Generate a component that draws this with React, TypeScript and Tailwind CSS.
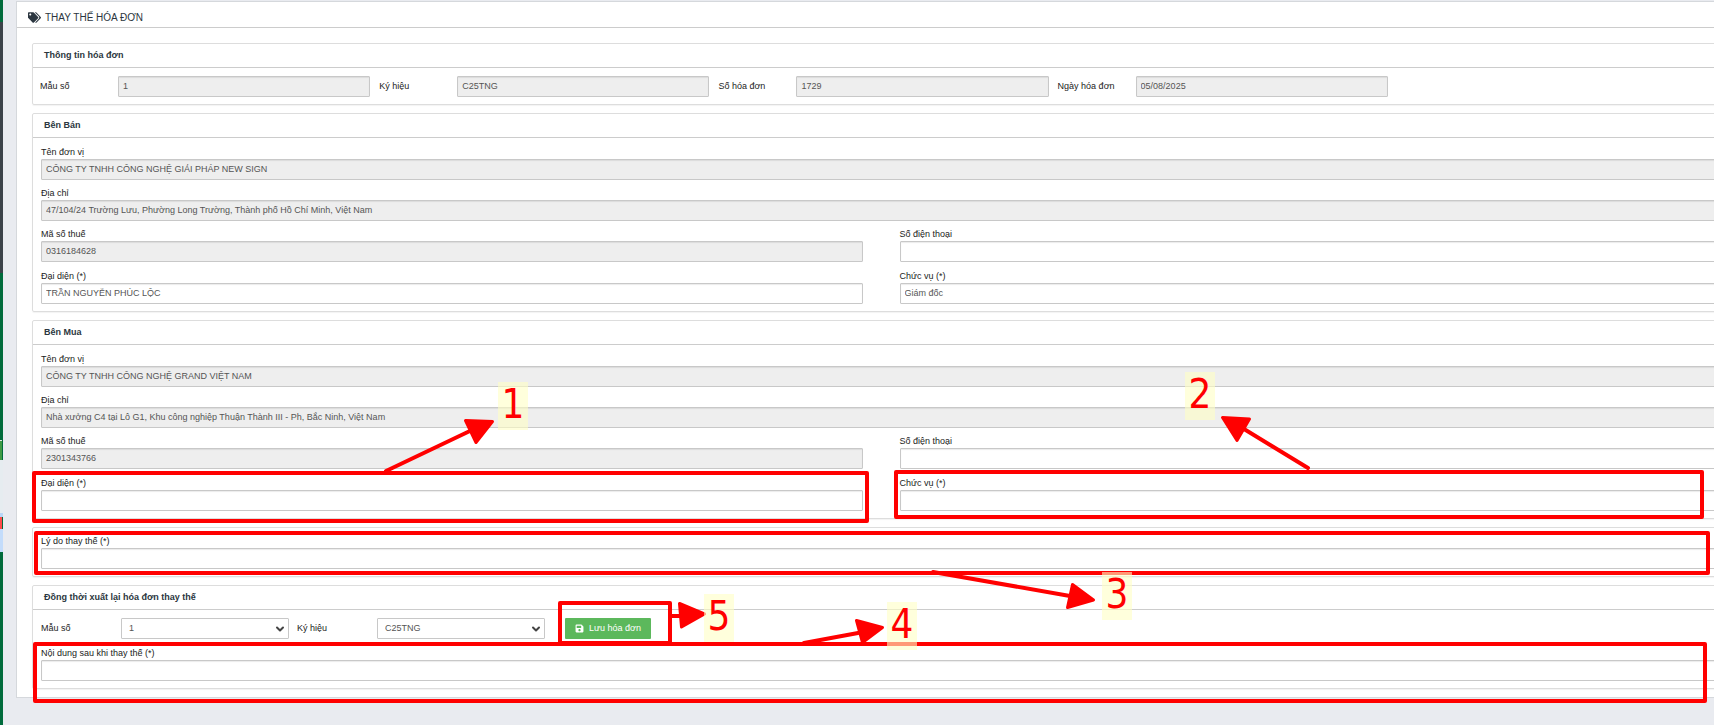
import { useId, type ReactNode } from "react";
import { FaTags, FaSave } from "react-icons/fa";
import { ChevronDown } from "lucide-react";

function Panel({ title, children }: { title?: string; children: ReactNode }) {
  return (
    <section className="rounded-[2px] border border-[#dddddd] shadow-[0_1px_1px_rgba(0,0,0,0.05)]">
      {title && (
        <h2 className="flex h-6 items-center border-b border-[#cccccc] px-[11px] text-[9px] font-bold text-[#2b3640]">
          {title}
        </h2>
      )}
      {children}
    </section>
  );
}

const inputBase =
  "block h-[21px] min-w-0 w-full rounded-[1px] border border-[#c8c8c8] px-1 pb-px text-[9px] leading-[14px] text-[#555555] shadow-[inset_0_1px_1px_rgba(0,0,0,0.08)] outline-none";

function Input({ id, value, disabled }: { id: string; value?: string; disabled?: boolean }) {
  return (
    <input
      id={id}
      type="text"
      defaultValue={value}
      readOnly={disabled}
      className={disabled ? `${inputBase} bg-[#eeeeee]` : `${inputBase} bg-white`}
    />
  );
}

type FieldProps = { label: string; value?: string; disabled?: boolean };

function StackedField({ label, value, disabled }: FieldProps) {
  const id = useId();
  return (
    <div>
      <label htmlFor={id} className="block h-5 pt-[7px] text-[9px] leading-3 text-[#222222]">
        {label}
      </label>
      <Input id={id} value={value} disabled={disabled} />
    </div>
  );
}

function InlineField({ label, value, disabled }: FieldProps) {
  const id = useId();
  return (
    <div className="flex items-center pr-[2px] pl-[7px]">
      <label htmlFor={id} className="w-[78px] shrink-0 text-[9px] text-[#222222]">
        {label}
      </label>
      <Input id={id} value={value} disabled={disabled} />
    </div>
  );
}

function SelectField({ label, value }: { label: string; value: string }) {
  const id = useId();
  return (
    <div className="flex w-64 items-center pl-2">
      <label htmlFor={id} className="w-20 shrink-0 text-[9px] text-[#222222]">
        {label}
      </label>
      <div className="relative min-w-0 flex-1">
        <select
          id={id}
          defaultValue={value}
          className="block h-[21px] w-full appearance-none rounded-[1px] border border-[#c8c8c8] bg-white px-[7px] text-[9px] text-[#555555] outline-none"
        >
          <option value={value}>{value}</option>
        </select>
        <ChevronDown
          className="pointer-events-none absolute top-[5px] right-[3px] size-3 text-[#444444]"
          strokeWidth={4}
        />
      </div>
    </div>
  );
}

type Party = { title: string; name: string; address: string; tax: string; agent?: string; role?: string };

function PartyPanel({ title, name, address, tax, agent, role }: Party) {
  return (
    <Panel title={title}>
      <div className="px-2 pt-px pb-[7px]">
        <StackedField label="Tên đơn vị" value={name} disabled />
        <StackedField label="Địa chỉ" value={address} disabled />
        <div className="grid grid-cols-2 gap-x-[37px] gap-y-px">
          <StackedField label="Mã số thuế" value={tax} disabled />
          <StackedField label="Số điện thoại" />
          <StackedField label="Đại diện (*)" value={agent} />
          <StackedField label="Chức vụ (*)" value={role} />
        </div>
      </div>
    </Panel>
  );
}

function Annotations() {
  const note =
    "absolute flex h-12 w-[30px] justify-center bg-[#ffffc4]/60 text-[40px] leading-[44px] text-[#ff0000] font-['DejaVu_Sans_Condensed','DejaVu_Sans',sans-serif]";
  return (
    <div className="pointer-events-none absolute inset-0 overflow-hidden">
      <svg className="absolute top-0 left-0" width="1714" height="725" fill="none" stroke="#ff0000" strokeWidth="4" strokeLinejoin="round" strokeLinecap="round">
        <rect x="34" y="473" width="833" height="48" />
        <rect x="896" y="472" width="806" height="45" />
        <rect x="36" y="533" width="1672" height="40" />
        <rect x="35" y="644" width="1670" height="57" />
        <rect x="560" y="603" width="110" height="40" />
        <path d="M386 471 472 430M1308 468 1244 429M933 572 1070 596M804 643 858 633M672 616 682 616" />
        <g fill="#ff0000" strokeWidth="3">
          <path d="M465.500 420.500 492.500 421.500 476 442.500Z" />
          <path d="M1222.500 417.500 1249.500 419 1237 440.500Z" />
          <path d="M1093.500 600 1072.500 584.500 1067.500 607.500Z" />
          <path d="M882.500 627.500 856.500 620.500 862.500 642.500Z" />
          <path d="M704.500 614 679.500 603.500 681.500 627Z" />
        </g>
      </svg>
      <span className={`${note} top-[382px] left-[498px]`}>1</span>
      <span className={`${note} top-[372px] left-[1185px]`}>2</span>
      <span className={`${note} top-[572px] left-[1102px]`}>3</span>
      <span className={`${note} top-[602px] left-[887px]`}>4</span>
      <span className={`${note} top-[594px] left-[704px]`}>5</span>
    </div>
  );
}

function DesktopEdge() {
  return (
    <div className="flex w-[3px] shrink-0 flex-col bg-[#006b3c]">
      <div className="h-[22px]" />
      <div className="h-[251px] bg-[#3b4249]" />
      <div className="h-[167px]" />
      <div className="mr-px h-5 border-t border-[#dfe7e4] bg-[#3f9a45]" />
      <div className="h-[53px] bg-[#e6ecf0]" />
      <div className="h-1 bg-[#b9d6f7]" />
      <div className="mr-px h-3 bg-[#ff4b4b]" />
      <div className="h-[23px] bg-[#c3dcfb]" />
    </div>
  );
}

export default function App() {
  return (
    <div className="relative flex min-h-screen overflow-hidden bg-[#e9ebf0] font-['Liberation_Sans',Arial,sans-serif]">
      <DesktopEdge />
      <main className="mt-px -mr-8 ml-[13px] min-w-0 flex-1 self-start border border-[#d5d8dc] bg-white">
        <h1 className="flex h-[26px] items-center gap-1 border-b border-[#cccccc] pt-[6px] pl-[11px] text-[10px] text-[#2b3640]">
          <FaTags className="size-[13px]" />
          THAY THẾ HÓA ĐƠN
        </h1>
        <div className="px-[15px] pt-[15px] pb-2">
          <form className="flex flex-col gap-2" onSubmit={(e) => e.preventDefault()}>
            <Panel title="Thông tin hóa đơn">
              <div className="grid grid-cols-5 pt-2 pb-[7px]">
                <InlineField label="Mẫu số" value="1" disabled />
                <InlineField label="Ký hiệu" value="C25TNG" disabled />
                <InlineField label="Số hóa đơn" value="1729" disabled />
                <InlineField label="Ngày hóa đơn" value="05/08/2025" disabled />
              </div>
            </Panel>
            <PartyPanel
              title="Bên Bán"
              name="CÔNG TY TNHH CÔNG NGHỆ GIẢI PHÁP NEW SIGN"
              address="47/104/24 Trường Lưu, Phường Long Trường, Thành phố Hồ Chí Minh, Việt Nam"
              tax="0316184628"
              agent="TRẦN NGUYỄN PHÚC LỘC"
              role="Giám đốc"
            />
            <PartyPanel
              title="Bên Mua"
              name="CÔNG TY TNHH CÔNG NGHỆ GRAND VIỆT NAM"
              address="Nhà xưởng C4 tại Lô G1, Khu công nghiệp Thuận Thành III - Ph, Bắc Ninh, Việt Nam"
              tax="2301343766"
            />
            <Panel>
              <div className="px-2 pb-[7px]">
                <StackedField label="Lý do thay thế (*)" />
              </div>
            </Panel>
            <Panel title="Đồng thời xuất lại hóa đơn thay thế">
              <div className="flex items-center pt-2 pb-px">
                <SelectField label="Mẫu số" value="1" />
                <SelectField label="Ký hiệu" value="C25TNG" />
                <button
                  type="submit"
                  className="ml-5 flex h-[21px] items-center gap-[5px] rounded-[1px] bg-[#5cb85c] px-[10px] text-[9px] text-white"
                >
                  <FaSave className="size-[9px]" />
                  Lưu hóa đơn
                </button>
              </div>
              <div className="px-2 pb-[7px]">
                <StackedField label="Nội dung sau khi thay thế (*)" />
              </div>
            </Panel>
          </form>
        </div>
      </main>
      <Annotations />
    </div>
  );
}
